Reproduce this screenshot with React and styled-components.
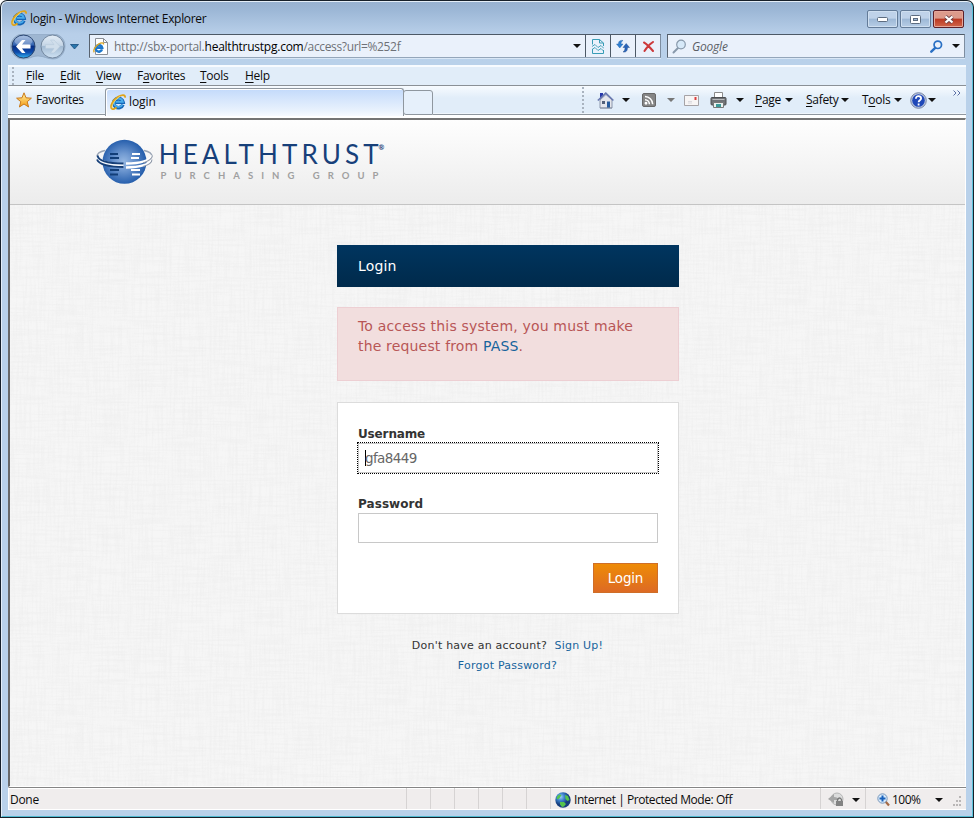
import React from 'react';
import styled, { createGlobalStyle, css } from 'styled-components';

const UI = '"Open Sans", "Noto Sans", sans-serif';
const WEB = '"DejaVu Sans", sans-serif';

const linen = `url("data:image/svg+xml,${encodeURIComponent(
  `<svg xmlns='http://www.w3.org/2000/svg' width='400' height='400'>
<filter id='h' x='0' y='0' width='100%' height='100%'><feTurbulence type='fractalNoise' baseFrequency='0.025 0.5' numOctaves='2' seed='4' stitchTiles='stitch'/><feColorMatrix values='0 0 0 0 0.4  0 0 0 0 0.4  0 0 0 0 0.4  0.5 0 0 0 -0.2'/></filter>
<filter id='v' x='0' y='0' width='100%' height='100%'><feTurbulence type='fractalNoise' baseFrequency='0.5 0.025' numOctaves='2' seed='9' stitchTiles='stitch'/><feColorMatrix values='0 0 0 0 0.4  0 0 0 0 0.4  0 0 0 0 0.4  0.5 0 0 0 -0.2'/></filter>
<rect width='400' height='400' filter='url(#h)' opacity='.28'/><rect width='400' height='400' filter='url(#v)' opacity='.28'/></svg>`
)}")`;

const GlobalStyle = createGlobalStyle`
  *, *::before, *::after { box-sizing: border-box; }
  body { margin: 0; background: #fff; overflow: hidden; }
  svg { display: block; flex: none; }
  a { color: #17649c; text-decoration: none; }
`;

const Window = styled.div`
  width: 974px;
  height: 818px;
  padding: 1px;
  background: #17202a;
  border-radius: 7px 7px 0 0;
  font: 12px/16px ${UI};
  color: #0b0b0b;
`;
const Frame = styled.div`
  height: 816px;
  display: flex;
  flex-direction: column;
  border: 1px solid #e4eef8;
  border-right-color: #5cc3da;
  border-bottom-color: #4fb9d0;
  border-radius: 6px 6px 0 0;
  background: linear-gradient(#98b2d1 0, #9cb7d6 8px, #b8cfe9 32px, #b9d1ea 60px);
  padding: 0 6px 6px 6px;
`;
const TitleBar = styled.header`
  height: 32px;
  flex: none;
  display: flex;
  align-items: flex-start;
  padding: 8px 2px 0 3px;
`;
const WindowTitle = styled.span`
  margin: 1px auto 0 3px;
  letter-spacing: -0.31px;
  white-space: pre;
`;
const CaptionButton = styled.button`
  width: 31px;
  height: 18px;
  margin: 0 0 0 2px;
  padding: 0;
  display: grid;
  place-items: center;
  border: 1px solid ${p => (p.$close ? '#5c2029' : '#637b98')};
  border-radius: 2px;
  box-shadow: inset 0 0 0 1px ${p => (p.$close ? '#e5a699' : '#cfdff0')};
  background: ${p => p.$close
    ? 'linear-gradient(#dc9a8b 0 45%, #bb3822 50%, #d0664b)'
    : 'linear-gradient(#bfd2e9 0 45%, #9db8d6 50%, #b7cde6)'};
`;
const NavBar = styled.div`
  height: 31px;
  flex: none;
  display: flex;
  align-items: flex-start;
  padding-left: 2px;
`;
const Field = styled.div`
  display: flex;
  align-items: center;
  flex: none;
  height: 24px;
  width: ${p => p.$w}px;
  margin: ${p => (p.$search ? '0 0 0 6px' : '0 0 0 9px')};
  border: 1px solid #59636f;
  border-color: #4d5966 #7d8da0 #94a6ba #59636f;
  background: #eaf1fb;
  box-shadow: 0 1px 0 #d9e7f6;
`;
const Url = styled.span`
  margin: 2px auto 0 5px;
  color: #6e7177;
  letter-spacing: -0.25px;
  b { font-weight: 400; color: #000; letter-spacing: -0.24px; }
  i { font-style: normal; letter-spacing: -0.34px; }
`;
const SearchHint = styled.span`
  margin: 2px auto 0 5px;
  font-style: italic;
  color: #5c6066;
  letter-spacing: -0.2px;
`;
const FieldButton = styled.button`
  width: 25px;
  height: 22px;
  border: 0;
  border-left: 1px solid #4d5966;
  padding: 0;
  display: grid;
  place-items: center;
  background: transparent;
`;
const MenuBar = styled.nav`
  height: 21px;
  flex: none;
  display: flex;
  align-items: center;
  border-top: 2px solid #f7fbff;
  border-bottom: 1px solid #8a9096;
  border-left: 1px solid #f0f6fd;
  background: #e1edf9;
`;
const Grip = styled.i`
  width: 2px;
  height: ${p => p.$h}px;
  flex: none;
  margin: ${p => p.$m};
  background: repeating-linear-gradient(#a9b3bf 0 2px, transparent 2px 4px);
`;
const MenuItem = styled.span`
  width: ${p => p.$w}px;
  flex: none;
  letter-spacing: -0.28px;
  white-space: nowrap;
  u { text-underline-offset: 2px; text-decoration-thickness: 1px; }
`;
const TabRow = styled.div`
  height: 32px;
  flex: none;
  display: flex;
  align-items: flex-start;
  background: linear-gradient(#f7fbff, #e1edf9 12px, #e1edf9 27px, #fff 28px);
`;
const FavoritesButton = styled.div`
  width: 97px;
  height: 29px;
  display: flex;
  align-items: center;
  padding: 0 0 0 8px;
  gap: 4px;
  border-bottom: 1px solid #8f979f;
  letter-spacing: -0.34px;
`;
const ActiveTab = styled.div`
  width: 299px;
  height: 28px;
  margin-top: 2px;
  display: flex;
  align-items: center;
  gap: 3px;
  padding: 0 0 2px 4px;
  border: 1px solid #8f979f;
  border-bottom: 0;
  border-radius: 3px 3px 0 0;
  box-shadow: inset 1px 1px 0 #fff;
  background: linear-gradient(#c3dafb, #e9f2fd 80%, #f6faff);
  letter-spacing: -0.1px;
`;
const NewTab = styled.div`
  width: 30px;
  height: 25px;
  margin: 4px 0 0 -1px;
  border: 1px solid #8f979f;
  border-radius: 3px 3px 0 3px;
  background: #e6f0fb;
`;
const CommandBar = styled.div`
  flex: 1;
  height: 29px;
  display: flex;
  align-items: center;
  border-bottom: 1px solid #8f979f;
`;
const Slot = styled.span`
  width: ${p => p.$w}px;
  flex: none;
  display: flex;
  align-items: center;
  letter-spacing: -0.3px;
  white-space: nowrap;
  u { text-underline-offset: 2px; text-decoration-thickness: 1px; }
`;
const Overflow = styled.span`
  align-self: flex-start;
  margin-top: 4px;
`;
const Viewport = styled.main`
  height: 669px;
  flex: none;
  display: flex;
  flex-direction: column;
  border-top: 2px solid #696969;
  border-left: 2px solid #696969;
  border-top-color: #747474;
  border-right: 1px solid #fff;
  border-bottom: 1px solid #fff;
  background: ${linen} #f6f6f6;
  font-family: ${WEB};
`;
const SiteHeader = styled.header`
  height: 85px;
  flex: none;
  padding: 14px 0 0 85px;
  border-bottom: 1px solid #c4c4c4;
  background: linear-gradient(#fefefe, #ececec);
`;
const Column = styled.section`
  width: 342px;
  margin: 40px 0 0 327px;
  display: flex;
  flex-direction: column;
`;
const PanelTitle = styled.h1`
  margin: 0;
  height: 42px;
  padding-left: 21px;
  font: 400 14px/42px ${WEB};
  letter-spacing: 0.14px;
  color: #fff;
  background: linear-gradient(#00355f, #002a4b);
`;
const ErrorBox = styled.div`
  height: 74px;
  margin-top: 20px;
  padding: 8px 0 0 20px;
  border: 1px solid #edcfd3;
  background: #f2dede;
  color: #b85656;
  font-size: 14px;
  line-height: 20px;
  white-space: pre;
`;
const Line = styled.div`letter-spacing: ${p => p.$ls}px;`;
const Form = styled.form`
  height: 212px;
  margin-top: 21px;
  padding: 21px 20px 0;
  display: flex;
  flex-direction: column;
  border: 1px solid #dcdcdc;
  background: #fff;
`;
const Label = styled.label`
  height: 19px;
  font: 700 12px/20px ${WEB};
  letter-spacing: ${p => p.$ls}px;
  color: #333;
`;
const Input = styled.div`
  height: 30px;
  flex: none;
  margin-bottom: 21px;
  padding: 0 0 0 6px;
  display: flex;
  align-items: center;
  border: 1px solid #c8c8c8;
  font-size: 13.5px;
  letter-spacing: -0.6px;
  color: #666;
  ${p => p.$focus && css`outline: 1px dotted #000;`}
`;
const Caret = styled.i`
  width: 1px;
  height: 16px;
  margin-right: -1px;
  background: #000;
`;
const Submit = styled.button`
  align-self: flex-end;
  width: 65px;
  height: 30px;
  margin-top: -1px;
  padding: 0;
  border: 1px solid #cf6e28;
  background: linear-gradient(#ee8b06, #dd6a24);
  color: #fff;
  font: 13.5px/28px ${WEB};
  letter-spacing: -0.2px;
`;
const Links = styled.div`
  margin: 22px 1px 0 0;
  text-align: center;
  font-size: 11px;
  line-height: 20px;
  letter-spacing: 0.22px;
  color: #333;
  white-space: pre;
`;
const StatusBar = styled.footer`
  flex: 1;
  display: flex;
  align-items: stretch;
  border-top: 1px solid #858585;
  border-bottom: 1px solid #fff;
  border-left: 1px solid #fff;
  box-shadow: inset 0 1px 0 #fff;
  background: #f0eded;
`;
const Pane = styled.div`
  width: ${p => p.$w}px;
  flex: none;
  display: flex;
  align-items: center;
  padding: 2px 0 0 ${p => p.$pl || 0}px;
  gap: ${p => p.$gap || 0}px;
  border-right: ${p => (p.$last ? '0' : '1px solid #d6d3d3')};
  letter-spacing: ${p => p.$ls || -0.3}px;
  white-space: pre;
`;
const Push = styled.span`margin-left: ${p => p.$x}px;`;

const Arrow = ({ color = '#111', w = 8 }) => (
  <svg width={w} height="4" viewBox="0 0 8 4"><path d="M0 0h8L4 4z" fill={color} /></svg>
);
const IeIcon = ({ size = 16 }) => (
  <svg width={size} height={size} viewBox="0 0 16 16" fill="none">
    <path d="M12.900 10.600A4.700 4.700 0 1 1 13.100 8.300H5.600" stroke="#1667b8" strokeWidth="3.600" />
    <path d="M12.400 10.600A4.500 4.500 0 0 1 4 8.300a4.500 4.500 0 0 1 8.800-.4H5.600" stroke="#48acec" strokeWidth="1.800" />
    <path d="M1.800 14.600C-.4 12 3.400 5.500 8.500 2.600 12 .6 15.500.4 15 3.600M1.800 14.600c1.100 1 3.300.1 4.800-1" stroke="#dfa51c" strokeWidth="1.900" />
    <path d="M2 13.500C2 10 6 4.700 10 2.400" stroke="#ffe27a" strokeWidth=".8" />
  </svg>
);
const PageIcon = () => (
  <svg width="16" height="17" viewBox="0 0 16 17" fill="none">
    <path d="M2.500.5h8l4 4v12h-12z" fill="#fff" stroke="#8a8f96" />
    <path d="M10.500.5v4h4" stroke="#8a8f96" />
    <g transform="translate(0 4) scale(.7)">
      <path d="M12.900 10.600A4.700 4.700 0 1 1 13.100 8.300H5.600" stroke="#1e78cc" strokeWidth="3.600" />
      <path d="M1.800 14.600C-.4 12 3.400 5.500 8.500 2.600 12 .6 15.500.4 15 3.600" stroke="#dba522" strokeWidth="1.900" />
    </g>
  </svg>
);
const NavButtons = () => (
  <svg width="70" height="26" viewBox="0 0 70 26">
    <defs>
      <linearGradient id="back" x2="0" y2="1">
        <stop offset="0" stopColor="#8fadd9" /><stop offset=".42" stopColor="#3566b3" />
        <stop offset=".5" stopColor="#082f86" /><stop offset=".75" stopColor="#0d4bac" /><stop offset="1" stopColor="#35b5f2" />
      </linearGradient>
      <linearGradient id="fwd" x2="0" y2="1">
        <stop offset="0" stopColor="#e4edf6" /><stop offset=".45" stopColor="#c6d6e6" />
        <stop offset=".5" stopColor="#a3bbd3" /><stop offset="1" stopColor="#cfe2f3" />
      </linearGradient>
    </defs>
    <path d="M13 0h30c7 0 12 5 12 12s-5 13-12 13c-6 0-9-3-15-3s-8 3-15 3A12.500 12.500 0 0 1 13 0z" fill="#9eb6d1" stroke="#8ba3bf" strokeWidth=".7" />
    <circle cx="13.500" cy="12.500" r="11.500" fill="url(#back)" stroke="#2b466f" />
    <ellipse cx="13.500" cy="7" rx="9" ry="5" fill="#fff" opacity=".28" />
    <path d="M6 12.500L12 6h3.500l-3.500 4.600h8.500v3.800H12l3.500 4.600H12z" fill="#fff" />
    <circle cx="42.500" cy="12.500" r="11.500" fill="url(#fwd)" stroke="#71869e" />
    <path d="M50 12.500L44 6h-3.500l3.500 4.600h-8.500v3.800H44L40.500 19H44z" fill="#d0deeb" stroke="#b3c6d9" strokeWidth=".5" />
    <path d="M60.500 10.500h8l-4 4.500z" fill="#2876ac" stroke="#174d7e" strokeWidth=".8" />
  </svg>
);
const CompatIcon = () => (
  <svg width="12" height="15" viewBox="0 0 12 15" fill="none" stroke="#389cb6">
    <path d="M.5 5.500V.5h7l4 3.500v3M7.500.5v3.500h4M.5 10v4.500h11V11" />
    <path d="M0 7.500l3-2 3 3 3-2 3 3M0 10.500l3-2 3 3 3-2 3 3" strokeWidth=".9" />
  </svg>
);
const RefreshIcon = () => (
  <svg width="14" height="14" viewBox="0 0 14 14">
    <path d="M7 1.500C3.500 1 2.500 2.500 2.500 5H.5l3.300 4L7 5H5C5 3.500 5.500 2.200 7 1.500z" fill="#2e80d2" stroke="#1c559f" strokeWidth=".4" />
    <path d="M7 13c3.500.5 4.500-1.500 4.500-4.500h2l-3.300-4L7 8.500h2c0 2-.5 3.500-2 4.500z" fill="#2864ba" stroke="#143e7d" strokeWidth=".4" />
  </svg>
);
const StopIcon = () => (
  <svg width="11" height="11" viewBox="0 0 11 11"><path d="M1 1.500Q4 3 10 10M10 1Q5 4 1.500 10" fill="none" stroke="#cc393b" strokeWidth="2" strokeLinecap="round" /></svg>
);
const Magnifier = ({ size, color, fill = 'none', w = 2 }) => (
  <svg width={size} height={size} viewBox="0 0 15 15" fill="none" stroke={color} strokeLinecap="round">
    <path d="M6 9L1.500 13.500" strokeWidth={w + 0.8} />
    <circle cx="9" cy="5.500" r="4.300" fill={fill} strokeWidth={w} />
  </svg>
);
const Star = () => (
  <svg width="16" height="16" viewBox="0 0 16 16">
    <defs><linearGradient id="gold" x2="0" y2="1"><stop stopColor="#fff2a2" /><stop offset="1" stopColor="#f59b13" /></linearGradient></defs>
    <path d="M8 .8l2 5 5.400.4-4.200 3.500 1.400 5.300L8 12l-4.600 3 1.400-5.300L.6 6.200 6 5.800z" fill="url(#gold)" stroke="#c9791b" strokeLinejoin="round" />
  </svg>
);
const Home = () => (
  <svg width="17" height="17" viewBox="0 0 17 17">
    <path d="M3 1h3v3.500L3 7z" fill="#2637aa" />
    <path d="M3 8l6-5.500L15 8v8H3z" fill="#e4e6ec" stroke="#75809b" strokeWidth=".8" />
    <path d="M.8 8.500L8.800 1.200l7.600 7.300" fill="none" stroke="#6878af" strokeWidth="1.600" />
    <path d="M5 9h3v3H5z" fill="#536079" /><path d="M10 9.500h3V16h-3z" fill="#285c9e" />
    <path d="M3 16h12" stroke="#8b93a3" />
  </svg>
);
const Rss = () => (
  <svg width="14" height="14" viewBox="0 0 14 14" fill="none" stroke="#fff" strokeWidth="1.500">
    <rect x=".5" y=".5" width="13" height="13" rx="1.500" fill="#858585" stroke="#686868" strokeWidth="1" />
    <path d="M3 3.500a8 8 0 0 1 7.700 7.700M3 6.700A4.500 4.500 0 0 1 7.400 11.200" />
    <circle cx="4" cy="10.300" r=".7" />
  </svg>
);
const Mail = () => (
  <svg width="15" height="11" viewBox="0 0 15 11">
    <path d="M.5.5h14v10H.5z" fill="#f7f5f5" stroke="#a6a3a6" />
    <path d="M4 6.500h4M4 8h4" stroke="#d3d3d8" strokeWidth=".8" /><path d="M10.500 2h2v3h-2z" fill="#db3e3e" />
  </svg>
);
const Printer = () => (
  <svg width="17" height="17" viewBox="0 0 17 17">
    <path d="M4.500.5h8v6h-8z" fill="#fff" stroke="#8a8a8a" />
    <path d="M1 6.500q0-1 1-1h13q1 0 1 1V12q0 1-1 1H2q-1 0-1-1z" fill="#6f7276" stroke="#4c4e51" />
    <path d="M2.500 7.500h12" stroke="#b8babd" />
    <path d="M3.500 10.500h10v5h-10z" fill="#e8f0ee" stroke="#777" /><path d="M6 12h5v3H6z" fill="#3c9a98" />
  </svg>
);
const Help = () => (
  <svg width="17" height="17" viewBox="0 0 17 17">
    <circle cx="8.500" cy="8.500" r="7.800" fill="#bac6de" stroke="#7886a6" />
    <circle cx="8.500" cy="8.500" r="6.300" fill="#1f48b8" />
    <path d="M5.900 6.700c0-3.700 5.200-3.300 5.200-.3 0 1.900-2.500 1.900-2.500 3.800M8.600 11.500v2" fill="none" stroke="#fff" strokeWidth="1.800" />
  </svg>
);
const Globe = () => (
  <svg width="16" height="16" viewBox="0 0 16 16">
    <defs><radialGradient id="sea" cx=".35" cy=".3"><stop stopColor="#9fd3f5" /><stop offset=".5" stopColor="#3b80cc" /><stop offset="1" stopColor="#173e7d" /></radialGradient></defs>
    <circle cx="8" cy="8" r="7.700" fill="url(#sea)" />
    <path d="M2.500 4q2-2.500 4-1L5 5.500 3 7.500 1.500 6.500zM10 3l3 1 1.500 4-2 1-2-2zM5 10h4l2 2-2 2.500-2 .5-2-2.500z" fill="#55c44c" />
  </svg>
);
const Lock = () => (
  <svg width="16" height="16" viewBox="0 0 16 16" fill="none">
    <circle cx="9" cy="7" r="6" fill="#dcdcdc" stroke="#b5b5b5" />
    <path d="M0 7l6-5v3q4 0 5 3H6v3z" fill="#a6a6a6" />
    <path d="M9.500 9V7.500q2-3 4 0V9" stroke="#777" strokeWidth="1.300" /><path d="M8 9h7v5H8z" fill="#828282" />
  </svg>
);
const ZoomIcon = () => (
  <svg width="13" height="14" viewBox="0 0 13 14" fill="none">
    <path d="M8.500 8.500L12 12.500" stroke="#a66a45" strokeWidth="2.200" />
    <circle cx="5.500" cy="5.500" r="4.700" fill="#d8eafa" stroke="#7796bb" />
    <path d="M5.500 2.500v6M2.500 5.500h6" stroke="#1861bc" strokeWidth="2" />
  </svg>
);
const Logo = () => (
  <svg width="294" height="56" viewBox="95 134 294 56">
    <defs><radialGradient id="ball" cx=".48" cy=".5" r=".55">
      <stop stopColor="#96b8e2" /><stop offset=".35" stopColor="#7099d1" /><stop offset="1" stopColor="#1b56a7" />
    </radialGradient></defs>
    <path d="M105 150.500c-5 1-8 3-8 6M144 150.500c5 1 8 3 8 6" fill="none" stroke="#9aa5b6" strokeWidth="1.400" />
    <circle cx="124.500" cy="161.800" r="22" fill="url(#ball)" />
    <path d="M110 154h8M110 158h9M110 170h9M110 174.500h8" stroke="#123e78" strokeWidth="2.200" />
    <path d="M132 154h8M131 158h8M131 170h9M132 174.500h8" stroke="#fff" strokeWidth="2.200" />
    <path d="M97.500 157c1 5.500 13 8 26 8.500" fill="none" stroke="#f4f8fd" strokeWidth="4" />
    <path d="M97.500 155.500c1 6 13 8 26 8M97 159.500c2 5 13 7.500 26.500 7.500" fill="none" stroke="#163f78" strokeWidth="1.800" />
    <path d="M126 163.500c14 0 25-3 26-8M126 167.500c14 0 25-3.500 26-8" fill="none" stroke="#fff" strokeWidth="2.400" />
    <path d="M143 163q9-3 9.500-7.500M143 166.500q9-2.500 9-7" fill="none" stroke="#8d97a7" strokeWidth="1.100" />
    <text x="158.700" y="163.500" textLength="220" fontFamily="Lato, sans-serif" fontSize="26" fill="#17407a">HEALTHTRUST</text>
    <text x="378.500" y="150" fontFamily="Lato, sans-serif" fontSize="7" fontWeight="700" fill="#17407a">®</text>
    <text x="160.500" y="179" textLength="218" fontFamily="Lato, sans-serif" fontSize="9.500" fontWeight="700" fill="#a0a0a0">PURCHASING GROUP</text>
  </svg>
);

export default function App() {
  return (
    <>
      <GlobalStyle />
      <Window>
        <Frame>
          <TitleBar>
            <IeIcon />
            <WindowTitle>login - Windows Internet Explorer</WindowTitle>
            <CaptionButton aria-label="Minimize"><svg width="11" height="5"><rect x=".5" y=".5" width="10" height="4" rx="1" fill="#fff" stroke="#5d6c80" /></svg></CaptionButton>
            <CaptionButton aria-label="Maximize"><svg width="11" height="9"><rect x=".5" y=".5" width="10" height="8" rx="1" fill="#fff" stroke="#5d6c80" /><rect x="3.500" y="3.500" width="4" height="2" fill="#9db8d6" stroke="#5d6c80" /></svg></CaptionButton>
            <CaptionButton $close aria-label="Close"><svg width="12" height="9" viewBox="0 0 12 9"><path d="M2.500 1.500l7 6M9.500 1.500l-7 6" stroke="#6a4046" strokeWidth="3.800" /><path d="M2.500 1.500l7 6M9.500 1.500l-7 6" stroke="#fff" strokeWidth="2.300" /></svg></CaptionButton>
          </TitleBar>
          <NavBar>
            <NavButtons />
            <Field $w={572}>
              <Push $x={3} /><PageIcon />
              <Url>http://sbx-portal.<b>healthtrustpg.com</b><i>/access?url=%252f</i></Url>
              <Arrow /><Push $x={4} />
              <FieldButton><CompatIcon /></FieldButton>
              <FieldButton><RefreshIcon /></FieldButton>
              <FieldButton><StopIcon /></FieldButton>
            </Field>
            <Field $w={298} $search>
              <Push $x={4} /><Magnifier size={15} color="#8899ab" fill="#d7e9f8" w={1.2} />
              <SearchHint>Google</SearchHint>
              <Magnifier size={13} color="#2a70c4" /><Push $x={9} /><Arrow /><Push $x={4} />
            </Field>
          </NavBar>
          <MenuBar>
            <Grip $h={18} $m="0 12px 0 3px" />
            <MenuItem $w={34}><u>F</u>ile</MenuItem>
            <MenuItem $w={36}><u>E</u>dit</MenuItem>
            <MenuItem $w={41}><u>V</u>iew</MenuItem>
            <MenuItem $w={63}>F<u>a</u>vorites</MenuItem>
            <MenuItem $w={45}><u>T</u>ools</MenuItem>
            <MenuItem $w={40}><u>H</u>elp</MenuItem>
          </MenuBar>
          <TabRow>
            <FavoritesButton><Star />Favorites</FavoritesButton>
            <ActiveTab><IeIcon />login</ActiveTab>
            <NewTab />
            <CommandBar>
              <Grip $h={26} $m="0 13px 0 149px" />
              <Slot $w={25}><Home /></Slot>
              <Slot $w={20}><Arrow /></Slot>
              <Slot $w={25}><Rss /></Slot>
              <Slot $w={17}><Arrow color="#777" /></Slot>
              <Slot $w={26}><Mail /></Slot>
              <Slot $w={26}><Printer /></Slot>
              <Slot $w={19}><Arrow /></Slot>
              <Slot $w={30}><span><u>P</u>age</span></Slot>
              <Slot $w={21}><Arrow /></Slot>
              <Slot $w={35}><span><u>S</u>afety</span></Slot>
              <Slot $w={21}><Arrow /></Slot>
              <Slot $w={32}><span>T<u>o</u>ols</span></Slot>
              <Slot $w={16}><Arrow /></Slot>
              <Slot $w={18}><Help /></Slot>
              <Slot $w={25}><Arrow /></Slot>
              <Overflow><svg width="8" height="6" fill="none" stroke="#5b6fa5"><path d="M.5.5L3 3 .5 5.500M4.500.5L7 3 4.500 5.500" /></svg></Overflow>
            </CommandBar>
          </TabRow>
          <Viewport>
            <SiteHeader><Logo /></SiteHeader>
            <Column>
              <PanelTitle>Login</PanelTitle>
              <ErrorBox>
                <Line $ls={0.18}>To access this system, you must make</Line>
                <Line $ls={0.17}>the request from <a href="#pass">PASS</a>.</Line>
              </ErrorBox>
              <Form>
                <Label $ls={-0.14}>Username</Label>
                <Input $focus><Caret />gfa8449</Input>
                <Label $ls={0.06}>Password</Label>
                <Input />
                <Submit type="button">Login</Submit>
              </Form>
              <Links>
                <div>Don't have an account?  <a href="#signup">Sign Up!</a></div>
                <div><a href="#forgot">Forgot Password?</a></div>
              </Links>
            </Column>
          </Viewport>
          <StatusBar>
            <Pane $w={398} $pl={1}>Done</Pane>
            <Pane $w={24} /><Pane $w={24} /><Pane $w={24} /><Pane $w={24} /><Pane $w={24} /><Pane $w={24} />
            <Pane $w={270} $pl={4} $gap={3} $ls={-0.44}><Globe />Internet | Protected Mode: Off</Pane>
            <Pane $w={45} $pl={7} $gap={8}><Lock /><Arrow /></Pane>
            <Pane $w={84} $pl={11} $gap={2} $ls={-0.5} $last><ZoomIcon />100%<Push $x={10} /><Arrow /></Pane>
            <Pane $w={14} $pl={3} $last>
              <svg width="9" height="12" viewBox="0 6 9 12" fill="#b9b6b6"><path d="M6 8h2v2H6zM3 12h2v2H3zM6 12h2v2H6zM0 16h2v2H0zM3 16h2v2H3zM6 16h2v2H6z" /></svg>
            </Pane>
          </StatusBar>
        </Frame>
      </Window>
    </>
  );
}
